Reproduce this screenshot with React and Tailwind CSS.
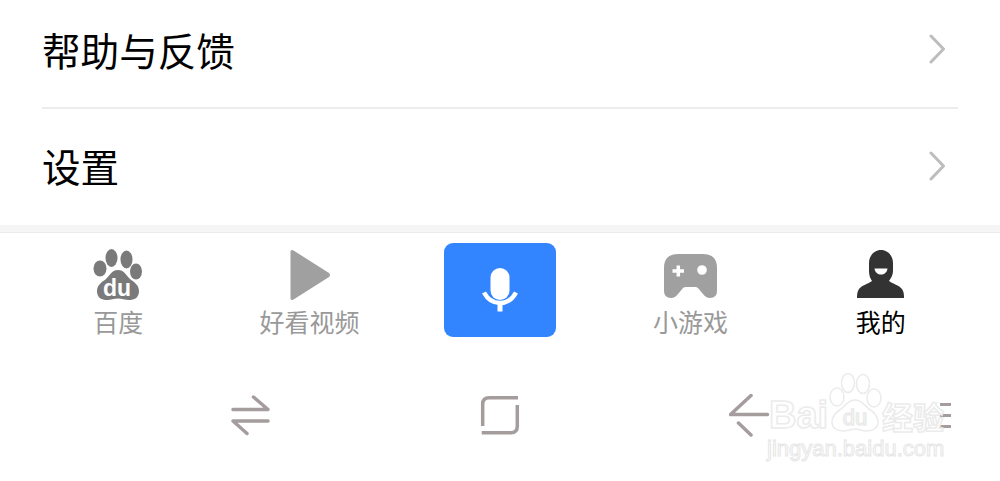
import React from 'react';

const cjk = 'font-["Noto_Sans_CJK_SC","Noto_Sans",sans-serif]';

const Chevron = () => (
  <svg width="16" height="30" viewBox="0 0 16 30" fill="none" stroke="#bdbdbd" strokeWidth="3" strokeLinecap="round" strokeLinejoin="round">
    <path d="M2 2L14.5 15L2 28" />
  </svg>
);

const BaiduIcon = () => (
  <svg width="50" height="52" viewBox="0 0 50 52" fill="#7a7a7a">
    <ellipse cx="7" cy="19.5" rx="6.5" ry="8" />
    <ellipse cx="18.5" cy="9" rx="6" ry="9" />
    <ellipse cx="33.5" cy="10.5" rx="6" ry="9" />
    <ellipse cx="43" cy="22.5" rx="6" ry="8" />
    <path d="M25 21C31 21 33 26 37 30C41 33 46 36 46 42C46 49 41 51 36 51C32 51 29 49.500 25 49.500C21 49.500 18 51 14 51C9 51 4 49 4 42C4 36 9 33 13 30C17 26 19 21 25 21Z" />
    <text x="24" y="47" textAnchor="middle" fontFamily="Liberation Sans, sans-serif" fontWeight="700" fontSize="23" fill="#fff">du</text>
  </svg>
);

const PlayIcon = () => (
  <svg className="ml-[2px]" width="41" height="52" viewBox="0 0 41 52" fill="#a0a0a0">
    <path d="M0.500 3Q0.500 0 3.500 1.500L39 24Q41 26 39 28L3.500 50.500Q0.500 52 0.500 49Z" />
  </svg>
);

const GameIcon = () => (
  <svg className="mb-[3px]" width="53" height="44" viewBox="0 0 53 44">
    <path fill="#a0a0a0" d="M14 0H39Q53 0 53 14V37Q53 44 46 44Q42 44 39 40L34 34Q33 33 31 33H22Q20 33 19 34L14 40Q11 44 7 44Q0 44 0 37V14Q0 0 14 0Z" />
    <path stroke="#fff" strokeWidth="3.500" d="M8.500 17H20M14.300 11.500V22.500" />
    <circle cx="38" cy="16" r="4.800" fill="#fff" />
  </svg>
);

const PersonIcon = () => (
  <svg className="mb-[3px]" width="47" height="48" viewBox="0 0 47 48">
    <path fill="#333" d="M24 0C31 0 36 6 36 13V21C36 25 34 28 32 31C36 34 42 35 45 39C47 42 47 45 47 48H0C0 45 0 42 2 39C5 35 11 34 15 31C13 28 12 25 12 21V13C12 6 17 0 24 0Z" />
    <path fill="#fff" d="M17.500 18.500H30.500C30 22.500 27 24.500 24 24.500C21 24.500 18 22.500 17.500 18.500Z" />
  </svg>
);

const MicIcon = () => (
  <svg width="36" height="44" viewBox="0 0 36 44" fill="none">
    <rect x="8.500" y="0" width="19" height="32" rx="9.500" fill="#fff" />
    <path d="M2 24.500C6 32 12 35 18 35C24 35 30 32 34 24.500" stroke="#fff" strokeWidth="4.500" />
    <rect x="15.500" y="36" width="5" height="7.500" fill="#fff" />
  </svg>
);

const SwitchIcon = () => (
  <svg width="40" height="42" viewBox="0 0 40 42" fill="none" stroke="#a59d9d" strokeWidth="3.500" strokeLinecap="round" strokeLinejoin="round">
    <path d="M3 15.500H38L23.500 3" />
    <path d="M38 27H3L17 39.500" />
  </svg>
);

const SquareIcon = () => (
  <svg width="40" height="40" viewBox="0 0 40 40" fill="none" stroke="#a59d9d" strokeWidth="3.500">
    <path d="M38 2.700H9Q2.700 2.700 2.700 9V31" />
    <path d="M1.700 37.700H31Q37.300 37.700 37.300 31V10" />
  </svg>
);

const BackIcon = () => (
  <svg width="42" height="44" viewBox="0 0 42 44" fill="none" stroke="#a59d9d" strokeWidth="3.500" strokeLinecap="round" strokeLinejoin="round">
    <path d="M22 2.500L1.500 21.500H38.500" />
    <path d="M9.500 30L22 42" />
  </svg>
);

const MenuRow = ({ title, className }) => (
  <div className={`flex items-center justify-between pr-[13px] ${className}`}>
    <span className="text-[38.600px] leading-none text-black">{title}</span>
    <Chevron />
  </div>
);

const TabItem = ({ icon, label, active, className = '' }) => (
  <div className={`flex flex-col items-center ${className}`}>
    <div className="flex h-[52px] items-end justify-center">{icon}</div>
    <span className={`mt-[2px] text-[25px] leading-[36px] ${active ? 'text-black' : 'text-[#999]'}`}>{label}</span>
  </div>
);

// faint site watermark sitting over the nav bar
const Watermark = () => (
  <div className="pointer-events-none absolute left-[767px] top-[373px] h-[92px] w-[182px]">
    <svg className="absolute left-[61px] top-0" width="54" height="60" viewBox="0 0 54 60" fill="#fff" stroke="#ebebeb" strokeWidth="1.500">
      <ellipse cx="9" cy="24" rx="7" ry="9" />
      <ellipse cx="20" cy="10" rx="6.500" ry="9.500" />
      <ellipse cx="35" cy="11" rx="6.500" ry="9.500" />
      <ellipse cx="46" cy="25" rx="7" ry="9" />
      <path d="M27 27C34 27 36 32 41 36C46 39 50 43 50 49C50 55 45 58 39 58C34 58 31 56 27 56C23 56 20 58 15 58C9 58 4 55 4 49C4 43 8 39 13 36C18 32 20 27 27 27Z" />
      <text x="27" y="52" textAnchor="middle" fontFamily="Liberation Sans, sans-serif" fontSize="22">du</text>
    </svg>
    <span className="absolute left-[2px] top-[22px] font-['Liberation_Sans',sans-serif] text-[38px] font-bold leading-[40px] text-white [-webkit-text-stroke:1.5px_#ebebeb]">Bai</span>
    <span className={`absolute left-[115px] top-[26px] text-[31px] font-bold leading-[34px] text-white [-webkit-text-stroke:1.5px_#ebebeb] ${cjk}`}>经验</span>
    <span className="absolute left-0 top-[63px] font-['Liberation_Sans',sans-serif] text-[22px] leading-[26px] text-white [-webkit-text-stroke:1px_#e6e6e6]">jingyan.baidu.com</span>
  </div>
);

export default function App() {
  return (
    <div className={`relative h-[481px] w-[1000px] overflow-hidden bg-white ${cjk}`}>
      {/* Menu list */}
      <div className="px-[42px]">
        <MenuRow title="帮助与反馈" className="h-[109px] border-b-2 border-[#ececec] pb-[9px]" />
        <MenuRow title="设置" className="h-[116px] pb-[3px]" />
      </div>

      <div className="h-[8px] border-b border-[#ebebeb] bg-[#f5f5f5]" />

      {/* Tab bar */}
      <div className="grid h-[132px] grid-cols-5 px-[24px] pt-[16px]">
        <TabItem icon={<BaiduIcon />} label="百度" className="pr-[2px]" />
        <TabItem icon={<PlayIcon />} label="好看视频" />
        <div className="flex justify-center">
          <div className="-mt-[6px] flex h-[94px] w-[112px] items-center justify-center rounded-[9px] bg-[#3385ff]">
            <MicIcon />
          </div>
        </div>
        <TabItem icon={<GameIcon />} label="小游戏" />
        <TabItem icon={<PersonIcon />} label="我的" active />
      </div>

      {/* Phone nav bar */}
      <div className="grid h-[100px] grid-cols-[250px_250px_250px_1fr] items-center pl-[125px]">
        <div className="flex justify-center"><SwitchIcon /></div>
        <div className="flex justify-center"><SquareIcon /></div>
        <div className="flex justify-center"><BackIcon /></div>
        <div className="flex flex-col items-end gap-[8px] pr-[49px]">
          <div className="h-[3px] w-[11px] bg-[#a59d9d]" />
          <div className="h-[3px] w-[11px] bg-[#a59d9d]" />
          <div className="h-[3px] w-[11px] bg-[#a59d9d]" />
        </div>
      </div>

      <Watermark />
    </div>
  );
}
